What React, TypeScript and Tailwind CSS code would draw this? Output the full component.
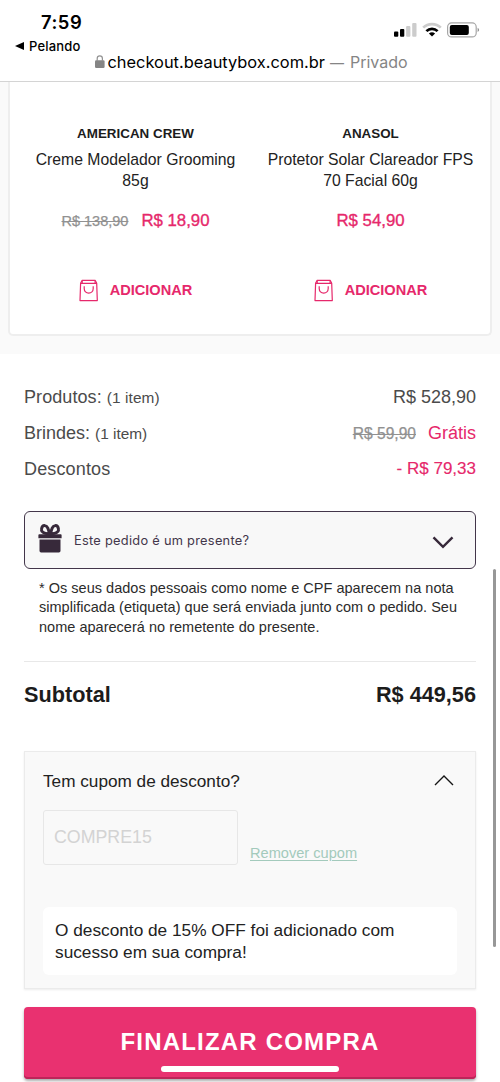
import React from "react";

interface Suggestion {
  brand: string;
  name: string[];
  oldPrice?: string;
  price: string;
}

const suggestions: Suggestion[] = [
  {
    brand: "AMERICAN CREW",
    name: ["Creme Modelador Grooming", "85g"],
    oldPrice: "R$ 138,90",
    price: "R$ 18,90",
  },
  {
    brand: "ANASOL",
    name: ["Protetor Solar Clareador FPS", "70 Facial 60g"],
    price: "R$ 54,90",
  },
];

const BagIcon = () => (
  <svg
    className="h-[23px] w-[20px]"
    viewBox="0 0 20 23"
    fill="none"
    stroke="#e6286b"
    strokeWidth="1.2"
    strokeLinejoin="round"
  >
    <path d="M1.6 4.2 3 1.4h13.3l1.4 2.8.6 17.4H1L1.6 4.2Z" />
    <path d="M1.6 4.4h16.1M3.2 2v2.2M16.1 2v2.2" />
    <path d="M5.2 7.3v2.2c0 2.9 2 4.7 4.5 4.7s4.5-1.8 4.5-4.7V7.3" />
  </svg>
);

const GiftIcon = () => (
  <svg className="h-[29px] w-[24px]" viewBox="0 0 24 29" fill="#37293a">
    <path d="M1.3 10.2h21.4q.9 0 .9.9v3.2H.4v-3.2q0-.9.9-.9Z" />
    <path d="M1.5 15.5h21v11.3q0 1.6-1.6 1.6H3.1q-1.6 0-1.6-1.6V15.5Z" />
    <path
      d="M11.4 9.7C6.2 10 3 8 3.5 5.2 3.8 2.8 5.1 1.4 7 1.6c2.7.2 3.5 3.9 4.4 8.1Z"
      fill="none"
      stroke="#37293a"
      strokeWidth="2.9"
    />
    <path
      d="M12.6 9.7c5.2.3 8.4-1.7 7.9-4.5-.3-2.4-1.6-3.8-3.5-3.6-2.7.2-3.5 3.9-4.4 8.1Z"
      fill="none"
      stroke="#37293a"
      strokeWidth="2.9"
    />
  </svg>
);

const StatusIcons = () => (
  <svg className="h-[16px] w-[88px] overflow-visible" viewBox="0 0 88 16">
    <rect x="1" y="8.5" width="4.3" height="5.3" rx="1" />
    <rect x="7" y="6" width="4.3" height="7.8" rx="1" />
    <rect x="13.1" y="3" width="4.3" height="10.8" rx="1" fill="#ccc" />
    <rect x="19.2" y="0" width="4.3" height="13.8" rx="1" fill="#ccc" />
    <g fill="none" strokeWidth="2.7">
      <path d="M30.2 4.6a12.7 12.7 0 0 1 17.6 0" stroke="#ccc" />
      <path d="M33.4 8.1a8 8 0 0 1 11.2 0" stroke="#000" />
    </g>
    <path d="M35.9 10.6a4.5 4.5 0 0 1 6.2 0L39 13.6Z" />
    <rect
      x="54.6"
      y="-.1"
      width="28.6"
      height="14"
      rx="4"
      fill="none"
      stroke="#a6a6a6"
      strokeWidth="1.2"
    />
    <rect x="56.8" y="1.9" width="19" height="10" rx="2" />
    <path d="M84.6 4.8q3 2.1 0 4.3Z" fill="#8e8e8e" />
  </svg>
);

const BrowserHeader = () => (
  <header className="flex h-[82px] flex-col border-b border-[#d4d4d4] bg-white font-['Inter'] text-black">
    <div className="flex justify-between">
      <div className="pl-[15px] pt-[11px]">
        <p className="pl-[26px] text-[18.4px] font-semibold leading-[22px] tracking-[0.5px]">
          7:59
        </p>
        <div className="mt-[4px] flex items-center gap-[5px] text-[13px] font-medium leading-[18px] tracking-[0.2px]">
          <svg className="h-[8px] w-[9px]" viewBox="0 0 9 8">
            <path d="M0 4 9 0v8Z" />
          </svg>
          <span>Pelando</span>
        </div>
      </div>
      <div className="mr-[19px] mt-[23px]">
        <StatusIcons />
      </div>
    </div>
    <div className="-mt-[3px] flex items-start whitespace-nowrap pl-[95px] text-[16.4px] leading-[21px]">
      <svg className="mr-[2.5px] mt-[3px] h-[13px] w-[10px]" viewBox="0 0 10 13">
        <rect y="5.3" width="9.6" height="7.7" rx="1.2" fill="#858585" />
        <path
          d="M2.2 6V3.5a2.6 2.6 0 0 1 5.2 0V6"
          fill="none"
          stroke="#929292"
          strokeWidth="1.2"
        />
      </svg>
      <span>checkout.beautybox.com.br</span>
      <span className="ml-[5px] flex text-[#858585]">
        <span className="w-[20px] text-[14px]">—</span>
        <span className="text-[16px]">Privado</span>
      </span>
    </div>
  </header>
);

const SuggestionItem = ({ item }: { item: Suggestion }) => (
  <div className="flex w-[235px] flex-col items-center whitespace-nowrap">
    <h2 className="text-[13.4px] font-bold leading-[18px] text-[#1c1c1c]">
      {item.brand}
    </h2>
    <p className="mt-[6px] text-center text-[15.75px] leading-[21px] text-[#222]">
      {item.name[0]}
      <br />
      {item.name[1]}
    </p>
    <div className="mt-[19px] flex items-center gap-[13px] leading-[22px]">
      {item.oldPrice && (
        <s className="text-[14.5px] text-[#919191] [-webkit-text-stroke:0.25px_#919191]">
          {item.oldPrice}
        </s>
      )}
      <span className="text-[16.8px] text-[#e6286b] [-webkit-text-stroke:0.35px_#e6286b]">
        {item.price}
      </span>
    </div>
    <button
      type="button"
      className="mt-[47px] flex h-[23px] items-center gap-[11px] text-[14.6px] font-bold text-[#e6286b]"
    >
      <BagIcon />
      ADICIONAR
    </button>
  </div>
);

const App = () => {
  return (
    <div className="relative h-[1082px] w-[500px] overflow-hidden bg-white font-['Liberation_Sans',sans-serif]">
      <BrowserHeader />

      <section className="h-[272px] bg-[#fafafa] px-[8px]">
        <div className="flex h-[254px] rounded-b-[5px] border-2 border-t-0 border-[#eee] bg-white pl-[8px] pt-[43px]">
          {suggestions.map((item) => (
            <SuggestionItem key={item.brand} item={item} />
          ))}
        </div>
      </section>

      <main className="px-[24px]">
        <div className="flex flex-col pt-[25px] text-[18px] leading-[36px] text-[#4b4b4b]">
          <div className="flex h-[36px] justify-between">
            <p className="tracking-[0.08px]">
              Produtos: <span className="text-[15.4px]">(1 item)</span>
            </p>
            <p>R$ 528,90</p>
          </div>
          <div className="flex h-[36px] justify-between">
            <p>
              Brindes: <span className="text-[15.4px]">(1 item)</span>
            </p>
            <p className="text-[#e6286b]">
              <s className="mr-[12px] text-[15.6px] text-[#919191] [-webkit-text-stroke:0.25px_#919191]">
                R$ 59,90
              </s>
              Grátis
            </p>
          </div>
          <div className="flex h-[36px] justify-between">
            <p className="tracking-[0.15px]">Descontos</p>
            <p className="text-[17px] text-[#e6286b] [-webkit-text-stroke:0.15px_#e6286b]">
              - R$ 79,33
            </p>
          </div>
        </div>

        <button
          type="button"
          className="mt-[24px] flex h-[58px] w-full items-center rounded-[6px] border-[1.5px] border-[#43364a] bg-[#f8f8f8] pl-[13px] pr-[21px] pt-[2px] font-['Inter'] text-[12.8px] tracking-[0.28px] text-[#43364a]"
        >
          <span className="mb-[5px]">
            <GiftIcon />
          </span>
          <span className="ml-[12px]">Este pedido é um presente?</span>
          <svg
            className="ml-auto mt-[2px] h-[13px] w-[22px]"
            viewBox="0 0 22 13"
            fill="none"
            stroke="#37293a"
            strokeWidth="2.4"
          >
            <path d="m1.5 1.3 9.5 9.6 9.5-9.6" />
          </svg>
        </button>

        <p className="mt-[10px] whitespace-nowrap pl-[15px] text-[14.5px] leading-[19.3px] tracking-[0.02px] text-[#2b2b2b]">
          * Os seus dados pessoais como nome e CPF aparecem na nota
          <br />
          simplificada (etiqueta) que será enviada junto com o pedido. Seu
          <br />
          nome aparecerá no remetente do presente.
        </p>

        <div className="mt-[24px] flex h-[90px] justify-between border-t border-[#e8e8e8] pt-[19px] text-[21.7px] font-bold leading-[28px] text-[#1c1c1c]">
          <p>Subtotal</p>
          <p>R$ 449,56</p>
        </div>

        <section className="h-[238px] border border-[#ebebeb] bg-[#f9f9f9] px-[18px] shadow-[0_1px_2px_#00000014]">
          <div className="flex items-center justify-between pt-[17px] text-[17.2px] leading-[24px] text-[#222]">
            <h3>Tem cupom de desconto?</h3>
            <svg
              className="mr-[3px] h-[11px] w-[20px]"
              viewBox="0 0 20 11"
              fill="none"
              stroke="#151515"
              strokeWidth="1.4"
            >
              <path d="m1 10 9-9 9 9" />
            </svg>
          </div>
          <div className="mt-[17px] flex">
            <div className="flex h-[55px] w-[195px] items-center rounded-[3px] border border-[#e7e7e7] pl-[10px] text-[17.8px] text-[#d3d3d3]">
              COMPRE15
            </div>
            <a className="ml-[12px] mt-[33px] text-[14.6px] leading-[20px] text-[#a3cabc] underline underline-offset-2">
              Remover cupom
            </a>
          </div>
          <p className="mt-[42px] h-[68px] whitespace-nowrap rounded-[6px] bg-white pl-[12px] pt-[12px] text-[17.25px] leading-[22px] text-[#222]">
            O desconto de 15% OFF foi adicionado com
            <br />
            sucesso em sua compra!
          </p>
        </section>

        <button
          type="button"
          className="mt-[18px] h-[72px] w-full rounded-[4px] bg-[#e93170] pb-[1px] text-[24px] font-bold tracking-[1.2px] text-white shadow-[inset_0_-2px_0_#bd2559,0_2px_3px_#00000055]"
        >
          FINALIZAR COMPRA
        </button>
      </main>

      {/* scrollbar thumb and home indicator float over the page */}
      <div className="absolute left-[493px] top-[569px] h-[378px] w-[3px] rounded-full bg-[#979797]" />
      <div className="absolute left-[161px] top-[1066px] h-[6px] w-[178px] rounded-full bg-white" />
    </div>
  );
};

export default App;
